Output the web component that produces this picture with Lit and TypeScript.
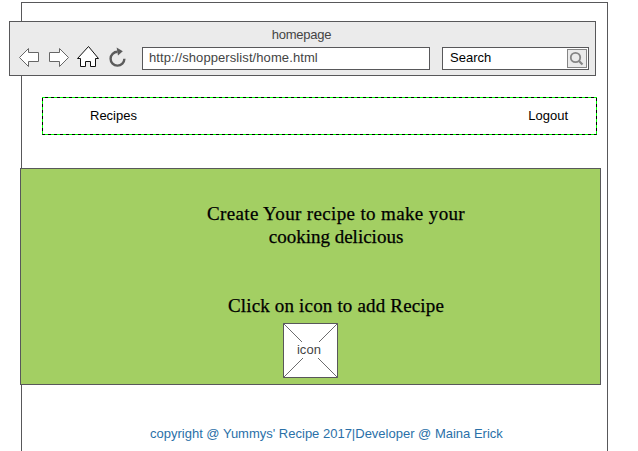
import { LitElement, html, css } from "lit";
import { customElement } from "lit/decorators.js";

@customElement("browser-bar")
class BrowserBar extends LitElement {
  static styles = css`
    :host {
      display: block;
      box-sizing: border-box;
      height: 55px;
      border: 1px solid #58585a;
      background: #ebebeb;
      color: #444;
    }
    .title {
      height: 25px;
      line-height: 26px;
      text-align: center;
      letter-spacing: -0.25px;
      padding-right: 2px;
    }
    .tools {
      display: flex;
      align-items: flex-start;
    }
    .icons {
      display: block;
      width: 132px;
      height: 28px;
      flex: none;
      overflow: visible;
    }
    .field {
      box-sizing: border-box;
      height: 23px;
      border: 1px solid #58585a;
      background: #fff;
      line-height: 20px;
      display: flex;
      justify-content: space-between;
    }
    .url {
      width: 288px;
      padding-left: 6px;
      letter-spacing: 0.09px;
    }
    .search {
      width: 147px;
      margin-left: 12px;
      padding: 1px 1px 1px 7px;
      color: #000;
      line-height: 18px;
    }
    .lens {
      display: block;
      width: 20px;
      height: 19px;
    }
  `;

  render() {
    return html`
      <div class="title">homepage</div>
      <div class="tools">
        <svg class="icons" viewBox="10 47 132 28">
          <g fill="#fff" stroke="#666" stroke-width="1">
            <path d="M19.5 57.5 28.5 48.5V52.5H38.5V61.5H28.5V66.5Z" />
            <path d="M68.5 57.5 59.5 48.5V52.5H49.5V61.5H59.5V66.5Z" />
            <path
              d="M77.5 58.5 88.5 46.5 98.5 58.5H95.5V66.5H90.5V61.5H85.5V66.5H80.5V58.5Z"
              stroke="#111"
            />
          </g>
          <path
            d="M117.5 51.8A6.9 6.9 0 1 0 124.4 58.8"
            fill="none"
            stroke="#5c5c5c"
            stroke-width="2.4"
          />
          <path d="M116.6 47.6 122.8 51.2 118 55.6Z" fill="#5c5c5c" />
        </svg>
        <div class="field url">http://shopperslist/home.html</div>
        <div class="field search">
          <span>Search</span>
          <svg class="lens" viewBox="0 0 20 19">
            <rect x=".5" y=".5" width="19" height="18" fill="#ebebeb" stroke="#858585" />
            <circle cx="8.5" cy="8.5" r="4.7" fill="none" stroke="#858585" stroke-width="1.8" />
            <path d="M12 12 15.5 15.5" stroke="#858585" stroke-width="2.2" />
          </svg>
        </div>
      </div>
    `;
  }
}

@customElement("image-placeholder")
class ImagePlaceholder extends LitElement {
  static styles = css`
    :host {
      display: grid;
      width: 55px;
      height: 55px;
    }
    svg,
    .label {
      grid-area: 1 / 1;
    }
    .label {
      place-self: center;
      background: #fff;
      color: #444;
      line-height: 16px;
      letter-spacing: 0.1px;
      padding: 0 1px;
      margin-right: 2px;
      margin-top: -2px;
    }
  `;

  render() {
    return html`
      <svg width="55" height="55" viewBox="0 0 55 55">
        <rect x=".5" y=".5" width="54" height="54" fill="#fff" stroke="#58585a" />
        <path d="M.5 .5 54.5 54.5M54.5 .5 .5 54.5" stroke="#6c6c6e" />
      </svg>
      <span class="label">icon</span>
    `;
  }
}

@customElement("app-root")
class AppRoot extends LitElement {
  static styles = css`
    :host {
      display: block;
      box-sizing: border-box;
      height: 451px;
      overflow: hidden;
      padding: 2px 0 0 21px;
      background: #fff;
      font: 13px "Liberation Sans", Arial, sans-serif;
    }
    .frame {
      box-sizing: border-box;
      width: 587px;
      height: 460px;
      border: 1px solid #58585a;
      padding-top: 18px;
    }
    .bar {
      width: 587px;
      margin-left: -13px;
    }
    .nav {
      display: grid;
      width: 555px;
      height: 38px;
      margin: 21px 0 0 20px;
    }
    .outline,
    .links {
      grid-area: 1 / 1;
    }
    .links {
      display: flex;
      justify-content: space-between;
      padding: 0 29px 0 48px;
      line-height: 37px;
      color: #000;
    }
    .hero {
      box-sizing: border-box;
      width: 581px;
      height: 217px;
      margin: 33px 0 0 -2px;
      border: 1px solid #58585a;
      background: #a3cf63;
      display: flex;
      flex-direction: column;
      align-items: center;
      padding: 33px 0 0 51px;
      color: #000;
      font: 19px/23px "Liberation Serif", "Times New Roman", serif;
      -webkit-text-stroke: 0.25px #000;
    }
    .lead {
      letter-spacing: 0.36px;
    }
    .hint {
      margin-top: 46px;
      letter-spacing: 0.17px;
    }
    .pic {
      margin: 6px 52px 0 0;
      font: 13px "Liberation Sans", Arial, sans-serif;
      -webkit-text-stroke: 0;
    }
    .footer {
      margin: 41px 0 0 128px;
      line-height: 16px;
      color: #2a70a8;
      white-space: nowrap;
    }
  `;

  render() {
    return html`
      <div class="frame">
        <browser-bar class="bar"></browser-bar>
        <nav class="nav">
          <svg class="outline" width="555" height="38" fill="none">
            <rect x=".5" y=".5" width="554" height="37" stroke="#00ff00" />
            <rect x=".5" y=".5" width="554" height="37" stroke="#000" stroke-dasharray="3 3" stroke-dashoffset="3.5" />
          </svg>
          <div class="links"><span>Recipes</span><span>Logout</span></div>
        </nav>
        <section class="hero">
          <div class="lead">Create Your recipe to make your</div>
          <div>cooking delicious</div>
          <div class="hint">Click on icon to add Recipe</div>
          <image-placeholder class="pic"></image-placeholder>
        </section>
        <div class="footer">copyright @ Yummys' Recipe 2017|Developer @ Maina Erick</div>
      </div>
    `;
  }
}
